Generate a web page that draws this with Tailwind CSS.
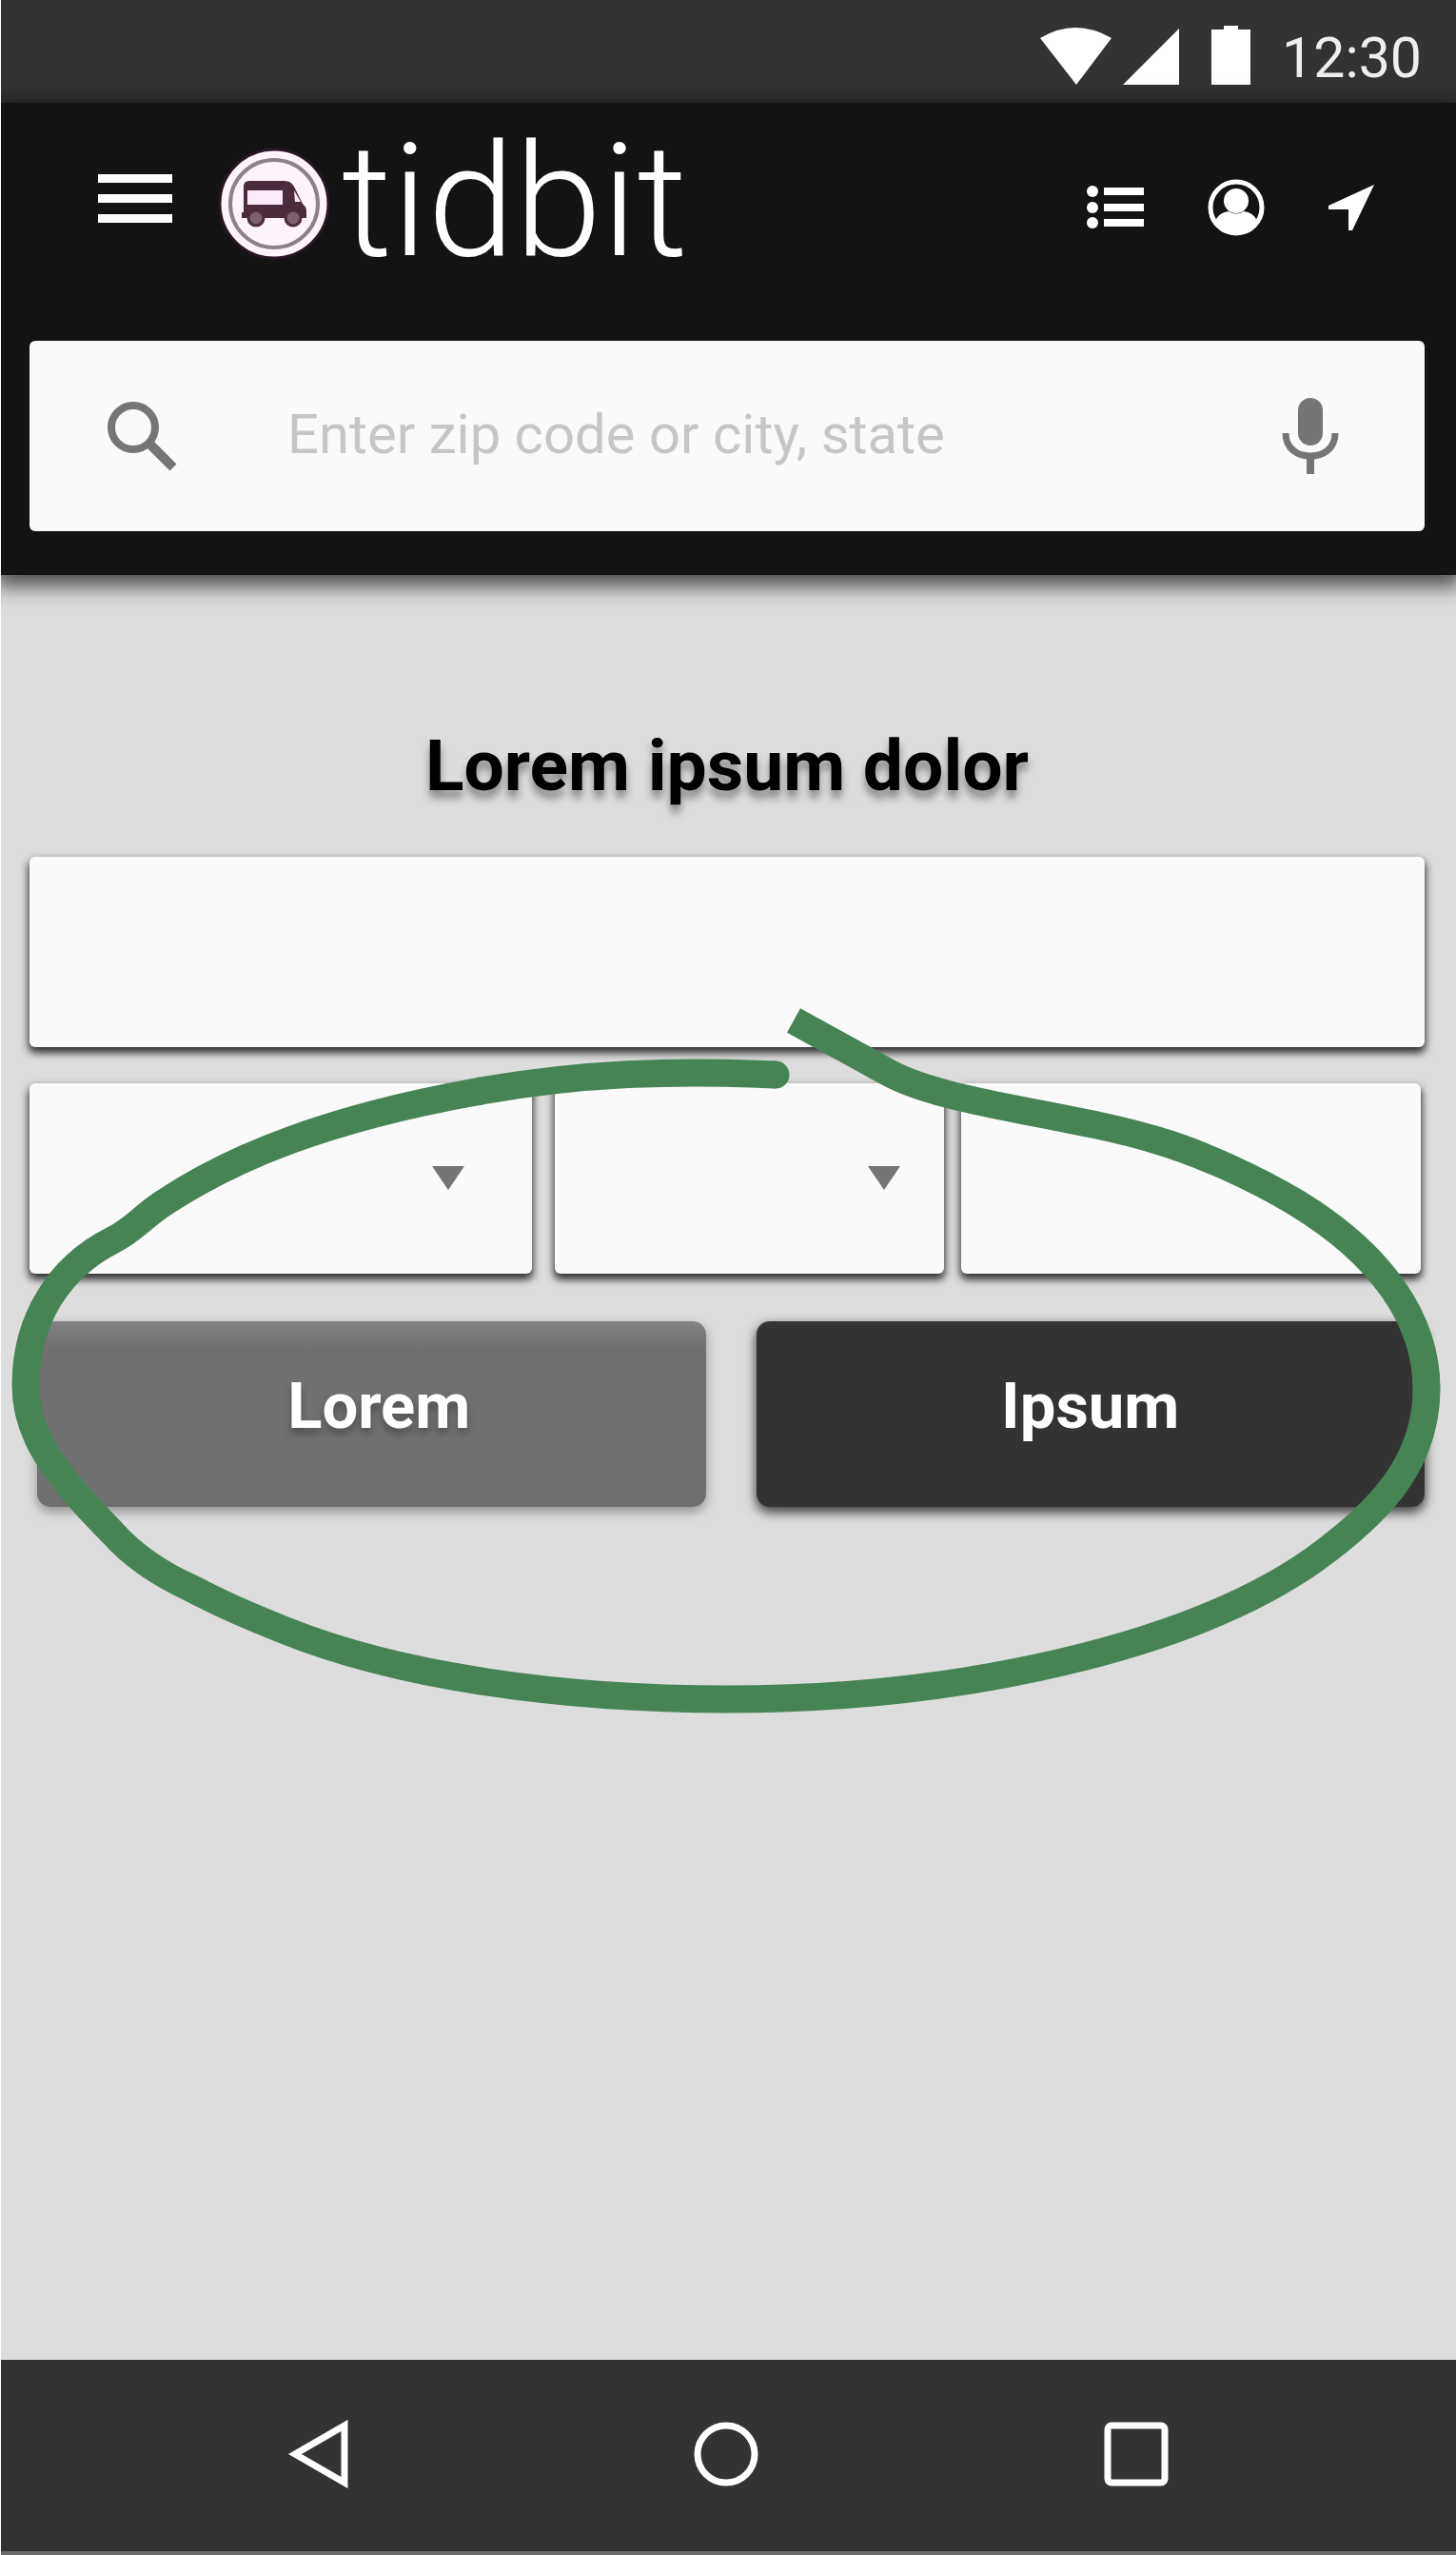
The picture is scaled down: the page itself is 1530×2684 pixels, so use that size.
<!DOCTYPE html>
<html lang="en">
<head>
<meta charset="utf-8">
<title>tidbit</title>
<script src="https://cdn.jsdelivr.net/npm/@tailwindcss/browser@4"></script>
</head>
<body class="min-h-screen flex flex-col border-l border-white bg-[#dddddd] font-['Roboto',sans-serif]">

<div class="flex h-[108px] items-center justify-end bg-[#333333] pt-2 pr-[36px] text-white">
  <svg class="h-[62px] w-[224px]" viewBox="0 0 224 62" fill="#fff" aria-hidden="true">
    <path d="M0 13Q37-9 75 13L38 62Z"/>
    <path d="M87 62L146 3V62Z"/>
    <path d="M180 4H193V0H208V4H221V62H180Z"/>
  </svg>
  <time class="ml-[30px] pt-1 text-[59px] leading-none text-[#eeeeee]">12:30</time>
</div>

<header class="relative z-10 bg-[#131313] pr-[33px] pb-[46px] pl-[30px] shadow-[0_6px_20px_6px_rgba(0,0,0,0.65)]">
  <div class="flex h-[212px] items-center pr-[53px] pl-[72px]">
    <button type="button" aria-label="Menu">
      <svg class="block h-[62px] w-[78px]" viewBox="0 0 78 62" fill="#fff"><path d="M0 0H78V9H0ZM0 21H78V30H0ZM0 42H78V51H0Z"/></svg>
    </button>
    <a href="#" class="ml-[48px] flex items-center text-white" aria-label="tidbit">
      <svg class="h-[118px] w-[118px] shrink-0" viewBox="0 0 118 118">
        <circle cx="59" cy="59" r="57" fill="#fdf3fb" stroke="#2b1524" stroke-width="3"/>
        <circle cx="59" cy="59" r="46" fill="none" stroke="#8d8189" stroke-width="4"/>
        <path d="M27 41Q27 35 33 35H70Q77 35 80 41L89 59Q93 62 93 67V74H25V68H27Z" fill="#4b2c3d"/>
        <rect x="31" y="45" width="37" height="15" fill="#fbeaf8"/>
        <path d="M80 45L87 57H81Z" fill="#fbeaf8"/>
        <circle cx="40" cy="74" r="8" fill="#7b6070" stroke="#4b2c3d" stroke-width="3"/>
        <circle cx="79" cy="74" r="8" fill="#7b6070" stroke="#4b2c3d" stroke-width="3"/>
      </svg>
      <span class="ml-[12px] pb-1 text-[165px] leading-[180px] font-light">tidbit</span>
    </a>
    <nav class="ml-auto flex items-center gap-[67px] pt-2">
      <a href="#" aria-label="List">
        <svg class="block h-[50px] w-[60px]" viewBox="0 0 60 50" fill="#fff"><path d="M18 4H60V12H18ZM18 21H60V29H18ZM18 37H60V45H18Z"/><circle cx="6" cy="8" r="6"/><circle cx="6" cy="25" r="6"/><circle cx="6" cy="41" r="6"/></svg>
      </a>
      <a href="#" aria-label="Profile">
        <svg class="block h-[60px] w-[60px]" viewBox="0 0 60 60"><circle cx="30" cy="30" r="27" fill="none" stroke="#fff" stroke-width="5"/><circle cx="30" cy="23" r="13" fill="#fff"/><path d="M8 44Q12 35 22 34Q30 39 38 34Q48 35 52 44Q44 58 30 58Q16 58 8 44Z" fill="#fff"/></svg>
      </a>
      <a href="#" aria-label="Location">
        <svg class="block h-[48px] w-[48px]" viewBox="0 0 48 48" fill="#fff"><path d="M48 0L25 48H21V26H0V22Z"/></svg>
      </a>
    </nav>
  </div>
  <form class="mt-[38px] flex h-[200px] items-center rounded-md bg-[#fafafa] pr-[90px] pl-[82px]">
    <button type="button" aria-label="Search">
      <svg class="block h-[73px] w-[73px]" viewBox="0 0 73 73" fill="none" stroke="#757575"><circle cx="27" cy="27" r="23" stroke-width="8"/><path d="M43 43L69 69" stroke-width="10"/></svg>
    </button>
    <input type="text" aria-label="Location" placeholder="Enter zip code or city, state" class="ml-[116px] h-[120px] min-w-0 flex-1 bg-transparent pb-1 text-[58px] text-[#333333] outline-none placeholder:text-[#c6c6c6]">
    <button type="button" aria-label="Voice search">
      <svg class="block h-[80px] w-[60px]" viewBox="0 0 60 80"><rect x="17" y="0" width="26" height="50" rx="13" fill="#757575"/><path d="M4 37C4 53 16 61 30 61S56 53 56 37" fill="none" stroke="#757575" stroke-width="7"/><path d="M26 61H34V80H26Z" fill="#757575"/></svg>
    </button>
  </form>
</header>

<main class="relative flex-1 pt-[150px] pr-[33px] pl-[30px]">
  <form>
    <h1 class="text-center text-[75px] leading-[100px] font-bold text-black [text-shadow:0_8px_8px_rgba(0,0,0,0.4)]">Lorem ipsum dolor</h1>
    <input type="text" aria-label="Address" class="mt-[46px] block h-[200px] w-full rounded-md bg-[#fafafa] px-10 text-[58px] shadow-[0_5px_9px_1px_rgba(0,0,0,0.8)] outline-none">
    <div class="mt-[38px] flex gap-[18px] pr-1">
      <div class="relative mr-[6px] min-w-0 flex-[528]">
        <select aria-label="City" class="block h-[200px] w-full appearance-none rounded-md bg-[#fafafa] px-10 text-[58px] shadow-[0_5px_9px_1px_rgba(0,0,0,0.8)] outline-none"><option></option></select>
        <svg class="pointer-events-none absolute top-[87px] right-[71px] h-[25px] w-[34px]" viewBox="0 0 34 25" fill="#757575"><path d="M0 0H34L17 25Z"/></svg>
      </div>
      <div class="relative min-w-0 flex-[410]">
        <select aria-label="State" class="block h-[200px] w-full appearance-none rounded-md bg-[#fafafa] px-10 text-[58px] shadow-[0_5px_9px_1px_rgba(0,0,0,0.8)] outline-none"><option></option></select>
        <svg class="pointer-events-none absolute top-[87px] right-[46px] h-[25px] w-[34px]" viewBox="0 0 34 25" fill="#757575"><path d="M0 0H34L17 25Z"/></svg>
      </div>
      <div class="min-w-0 flex-[483]">
        <input type="text" aria-label="Zip code" class="block h-[200px] w-full rounded-md bg-[#fafafa] px-10 text-[58px] shadow-[0_5px_9px_1px_rgba(0,0,0,0.8)] outline-none">
      </div>
    </div>
    <div class="mt-[50px] grid grid-cols-2 gap-[53px] pl-2">
      <button type="button" class="h-[195px] rounded-[14px] bg-linear-to-b from-[#828282] to-[#707070] to-15% pb-4 pl-4 text-[67px] font-bold text-white shadow-[0_5px_12px_rgba(0,0,0,0.35)] [text-shadow:0_6px_8px_rgba(0,0,0,0.3)]">Lorem</button>
      <button type="button" class="h-[195px] rounded-[14px] bg-[#333333] pb-4 text-[67px] font-bold text-white shadow-[0_5px_12px_1px_rgba(0,0,0,0.7)]">Ipsum</button>
    </div>
  </form>
  <svg class="pointer-events-none absolute top-0 left-0 w-full" viewBox="1 604 1529 1230" fill="none" stroke="#468456" stroke-width="29" aria-hidden="true">
    <path d="M834 1072L934 1127C995 1160 1120 1169 1216 1198C1261 1211 1320 1238 1363 1264C1450 1317 1499 1385 1499 1459C1499 1540 1445 1592 1380 1639C1250 1730 1010 1785 764 1785C590 1785 420 1761 300 1713C255 1695 235 1686 200 1668Q148 1644 118 1610C100 1591 92 1584 73 1561C45 1527 27 1495 27 1455C27 1385 63 1331 118 1303C140 1292 148 1280 170 1265C245 1215 345 1175 500 1147C610 1127 710 1124 815 1129"/>
    <circle cx="815" cy="1129" r="14.500" fill="#468456" stroke="none"/>
  </svg>
</main>

<nav class="flex h-[205px] items-center justify-center gap-[363px] border-b-4 border-[#6b6b6b] bg-[#333333] pr-[5px] pb-1">
  <button type="button" aria-label="Back"><svg class="block h-[72px] w-[68px]" viewBox="0 0 68 72" fill="none" stroke="#fff" stroke-width="7"><path d="M64 6V66L12 36Z"/></svg></button>
  <button type="button" aria-label="Home"><svg class="block h-[68px] w-[68px]" viewBox="0 0 68 68" fill="none" stroke="#fff" stroke-width="7"><circle cx="34" cy="34" r="30"/></svg></button>
  <button type="button" aria-label="Recents"><svg class="block h-[68px] w-[68px]" viewBox="0 0 68 68" fill="none" stroke="#fff" stroke-width="7"><rect x="4" y="4" width="60" height="60" rx="4"/></svg></button>
</nav>
</body>
</html>
